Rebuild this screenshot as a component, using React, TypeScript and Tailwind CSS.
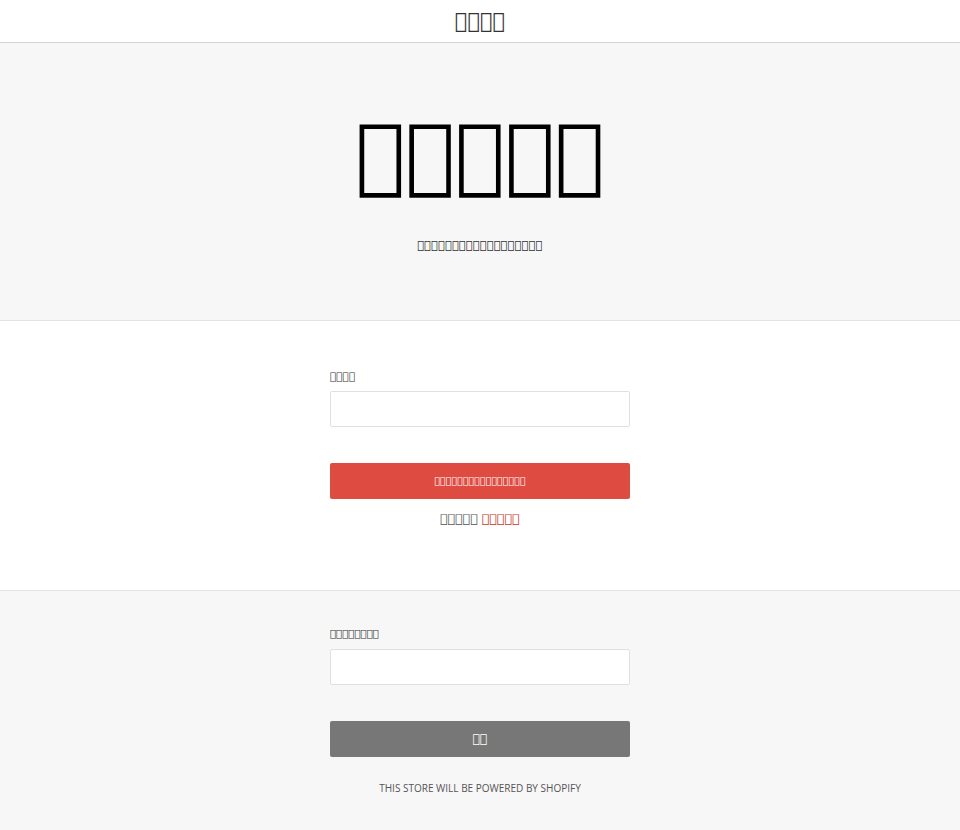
import React from "react";

const t = (n: number) => "\uFFFF".repeat(n);
const tofu = "font-['DejaVu_Sans',sans-serif]";

export default function App() {
  return (
    <div className="min-h-[830px] bg-[#f7f7f7] font-['Open_Sans',sans-serif]">
      <header className="h-[43px] bg-white border-b border-[#d4d4d4] flex items-center justify-center">
        <span className={`${tofu} text-[21px] leading-[24px] text-[#333]`}>{t(4)}</span>
      </header>
      <section className="h-[278px] border-b border-[#e3e3e3] flex flex-col items-center pt-[70px]">
        <h1 className={`${tofu} text-[83px] leading-[84px] text-black`}>{t(5)}</h1>
        <p className={`${tofu} mt-[38px] text-[11.6px] leading-[20px] text-[#333]`}>{t(18)}</p>
      </section>
      <section className="h-[270px] bg-white border-b border-[#e3e3e3] flex justify-center pt-[48px]">
        <div className="w-[300px] flex flex-col">
          <label className={`${tofu} text-[10.5px] leading-[14px] text-[#333] mb-[8px]`}>{t(4)}</label>
          <input className="h-[36px] border border-[#e0e0e0] rounded-[2px] bg-white" />
          <button className={`${tofu} mt-[36px] h-[36px] bg-[#de4c41] rounded-[2px] text-white text-[9.5px]`}>{t(16)}</button>
          <p className={`${tofu} mt-[10px] text-center text-[12.6px] leading-[20px] text-[#555]`}>
            {t(5)} <span className="text-[#c0392b]">{t(5)}</span>
          </p>
        </div>
      </section>
      <section className="bg-[#f7f7f7] flex justify-center pt-[36px] pb-[30px]">
        <div className="w-[300px] flex flex-col">
          <label className={`${tofu} text-[10.2px] leading-[14px] text-[#333] mb-[8px]`}>{t(8)}</label>
          <input className="h-[36px] border border-[#e0e0e0] rounded-[2px] bg-white" />
          <button className={`${tofu} mt-[36px] h-[36px] bg-[#777] rounded-[2px] text-white text-[12px]`}>{t(2)}</button>
          <p className="mt-[24px] text-center text-[10px] leading-[14px] text-[#555] uppercase">This store will be powered by Shopify</p>
        </div>
      </section>
    </div>
  );
}
